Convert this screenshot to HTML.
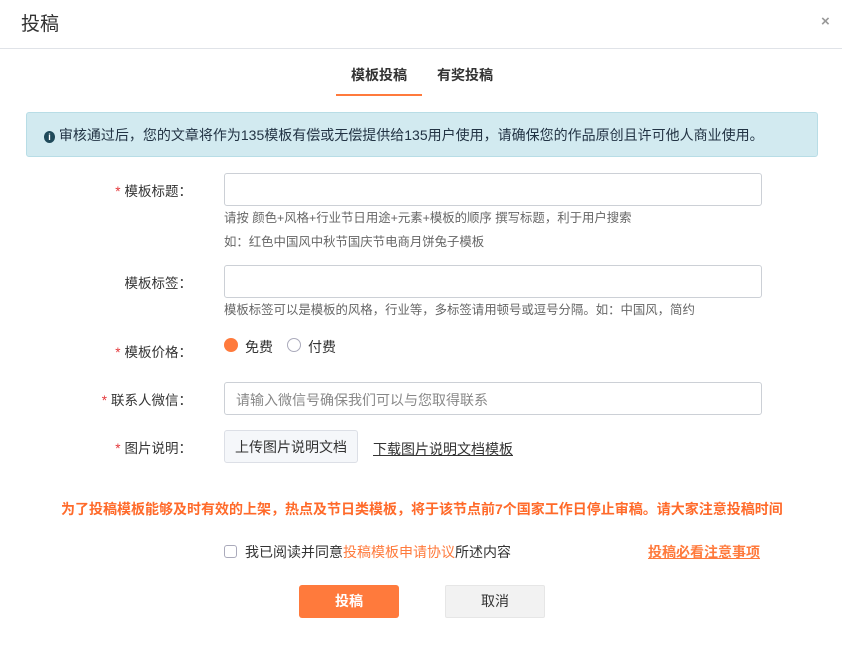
<!DOCTYPE html>
<html><head><meta charset="utf-8"><style>
*{box-sizing:border-box;margin:0;padding:0}
body{width:842px;height:648px;background:#fff;font-family:"Liberation Sans","Noto Sans CJK SC",sans-serif;color:#333;position:relative;overflow:hidden;font-size:14px}
.a{position:absolute;white-space:nowrap}
.inp{position:absolute;left:224px;width:538px;height:33px;border:1px solid #ccd0d6;border-radius:3px}
.lab{position:absolute;right:650px;font-size:13.5px;color:#333}
.lab b{color:#e4393c;font-weight:normal;margin-right:4px}
.hint{position:absolute;left:224px;font-size:12.4px;color:#666}
</style></head><body>
<div class="a" style="left:21px;top:9px;font-size:19px;color:#333">投稿</div>
<div class="a" style="left:821px;top:13px;font-size:15px;color:#999;font-weight:bold">×</div>
<div style="position:absolute;left:0;top:48px;width:842px;height:1px;background:#e0e3e8"></div>
<div class="a" style="left:351px;top:65px;font-size:14px;font-weight:bold;color:#333">模板投稿</div>
<div class="a" style="left:437px;top:65px;font-size:14px;font-weight:bold;color:#333">有奖投稿</div>
<div style="position:absolute;left:336px;top:94px;width:86px;height:2px;background:#ff7a3c"></div>
<div style="position:absolute;left:26px;top:112px;width:792px;height:45px;background:#d2eaf0;border:1px solid #b8dde6;border-radius:3px"></div>
<div class="a" style="left:44px;top:125px;font-size:14px;color:#234"><span style="display:inline-block;width:11px;height:12px;border-radius:50%;background:#1f4a5a;color:#fff;font-size:9px;text-align:center;line-height:12px;font-weight:bold;vertical-align:0px">i</span> 审核通过后，您的文章将作为135模板有偿或无偿提供给135用户使用，请确保您的作品原创且许可他人商业使用。</div>

<div class="lab" style="top:180px"><b>*</b>模板标题：</div>
<div class="inp" style="top:173px"></div>
<div class="hint" style="top:208px">请按 颜色+风格+行业节日用途+元素+模板的顺序 撰写标题，利于用户搜索</div>
<div class="hint" style="top:232px">如：红色中国风中秋节国庆节电商月饼兔子模板</div>

<div class="lab" style="top:272px">模板标签：</div>
<div class="inp" style="top:265px"></div>
<div class="hint" style="top:300px">模板标签可以是模板的风格，行业等，多标签请用顿号或逗号分隔。如：中国风，简约</div>

<div class="lab" style="top:341px"><b>*</b>模板价格：</div>
<div style="position:absolute;left:224px;top:338px;width:14px;height:14px;border-radius:50%;background:#ff7a3c"></div>
<div class="a" style="left:245px;top:337px">免费</div>
<div style="position:absolute;left:287px;top:338px;width:14px;height:14px;border-radius:50%;border:1px solid #aab"></div>
<div class="a" style="left:308px;top:337px">付费</div>

<div class="lab" style="top:389px"><b>*</b>联系人微信：</div>
<div class="inp" style="top:382px"></div>
<div class="a" style="left:236px;top:390px;color:#888">请输入微信号确保我们可以与您取得联系</div>

<div class="lab" style="top:437px"><b>*</b>图片说明：</div>
<div style="position:absolute;left:224px;top:430px;width:134px;height:33px;background:#f5f7fa;border:1px solid #dcdfe6;border-radius:3px"></div>
<div class="a" style="left:235px;top:437px">上传图片说明文档</div>
<div class="a" style="left:373px;top:439px;text-decoration:underline">下载图片说明文档模板</div>

<div class="a" style="left:61px;top:499px;color:#ff6a2a;font-weight:bold;font-size:14px">为了投稿模板能够及时有效的上架，热点及节日类模板，将于该节点前7个国家工作日停止审稿。请大家注意投稿时间</div>

<div style="position:absolute;left:224px;top:545px;width:13px;height:13px;border:1px solid #aab;border-radius:3px"></div>
<div class="a" style="left:245px;top:542px">我已阅读并同意<span style="color:#ff7a3c">投稿模板申请协议</span>所述内容</div>
<div class="a" style="left:648px;top:542px;color:#ff7a3c;font-weight:bold;text-decoration:underline">投稿必看注意事项</div>

<div style="position:absolute;left:299px;top:585px;width:100px;height:33px;background:#ff7a3c;border-radius:3px;color:#fff;text-align:center;line-height:32px;font-weight:bold">投稿</div>
<div style="position:absolute;left:445px;top:585px;width:100px;height:33px;background:#f2f2f2;border:1px solid #e6e6e6;border-radius:2px;text-align:center;line-height:30px">取消</div>
</body></html>
